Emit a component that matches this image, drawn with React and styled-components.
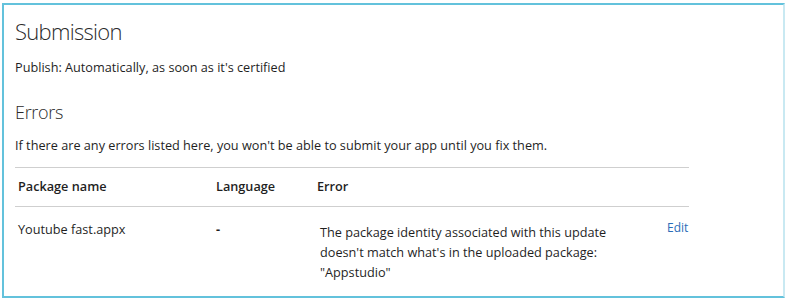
import React from "react";
import styled, { createGlobalStyle } from "styled-components";

const Global = createGlobalStyle`
  html, body { margin: 0; padding: 0; background: #fff; }
  body { font-family: "Segoe UI", "Open Sans", "Noto Sans", sans-serif; color: #1f1f1f; }
`;

const Frame = styled.div`
  margin: 3px 0 0 2px;
  width: 783px;
  height: 295px;
  box-sizing: border-box;
  border: 2px solid #63c2dc;
  border-right-color: #c9e9f2;
  padding: 0 0 0 11px;
  overflow: hidden;
`;

const Heading = styled.h1`
  margin: 10px 0 0 0;
  font-size: 22px;
  font-weight: 300;
  letter-spacing: -0.7px;
  line-height: 32px;
  color: #2a2a2a;
`;

const SubHeading = styled(Heading)`
  margin-top: 22px;
  font-size: 18px;
  letter-spacing: -0.3px;
  line-height: 28px;
`;

const Text = styled.p`
  margin: ${(p) => p.$top || 0}px 0 0 0;
  font-size: 12.7px;
  line-height: 18px;
`;

const Table = styled.div`
  margin-top: 13px;
  width: 674px;
  border-top: 1px solid #cfcfcf;
`;

const Row = styled.div`
  display: grid;
  grid-template-columns: 198px 101px 1fr 22px;
  align-items: start;
  padding: ${(p) => (p.$head ? "8px 0 10px 3px" : "12px 0 0 3px")};
  border-bottom: ${(p) => (p.$head ? "1px solid #cfcfcf" : "none")};
  font-size: 12.7px;
  line-height: 20px;
  font-weight: ${(p) => (p.$head ? 600 : 400)};
`;

const Cell = styled.div`
  padding-left: ${(p) => p.$indent || 0}px;
  margin-top: ${(p) => p.$top || 0}px;
`;

const Dash = styled.span`
  font-weight: 700;
`;

const EditLink = styled.a`
  color: #2b6cb8;
  font-size: 12px;
  text-decoration: none;
  cursor: pointer;
`;

export default function App() {
  return (
    <>
      <Global />
      <Frame>
        <Heading>Submission</Heading>
        <Text $top={11}>Publish: Automatically, as soon as it's certified</Text>
        <SubHeading>Errors</SubHeading>
        <Text $top={10}>
          If there are any errors listed here, you won't be able to submit your app until you fix them.
        </Text>
        <Table>
          <Row $head>
            <Cell>Package name</Cell>
            <Cell>Language</Cell>
            <Cell>Error</Cell>
            <Cell />
          </Row>
          <Row>
            <Cell>Youtube fast.appx</Cell>
            <Cell>
              <Dash>-</Dash>
            </Cell>
            <Cell $indent={3} $top={3}>
              The package identity associated with this update
              <br />
              doesn't match what's in the uploaded package:
              <br />
              "Appstudio"
            </Cell>
            <Cell $top={-2}>
              <EditLink>Edit</EditLink>
            </Cell>
          </Row>
        </Table>
      </Frame>
    </>
  );
}
